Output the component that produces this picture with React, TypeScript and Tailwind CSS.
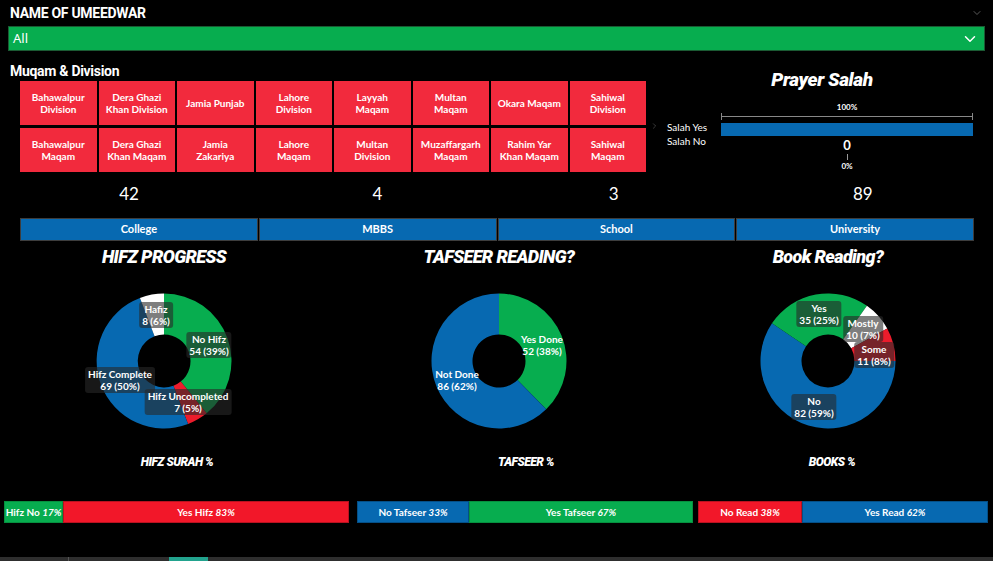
import { ChevronDown, ChevronRight } from "lucide-react";

const GREEN = "#07ad4f";
const BLUE = "#0769b1";
const RED = "#ec1c2c";
const WHITE = "#ffffff";

const tiles = [
  ["Bahawalpur", "Division"],
  ["Dera Ghazi", "Khan Division"],
  ["Jamia Punjab"],
  ["Lahore", "Division"],
  ["Layyah", "Maqam"],
  ["Multan", "Maqam"],
  ["Okara Maqam"],
  ["Sahiwal", "Division"],
  ["Bahawalpur", "Maqam"],
  ["Dera Ghazi", "Khan Maqam"],
  ["Jamia", "Zakariya"],
  ["Lahore", "Maqam"],
  ["Multan", "Division"],
  ["Muzaffargarh", "Maqam"],
  ["Rahim Yar", "Khan Maqam"],
  ["Sahiwal", "Maqam"],
];

type Slice = { v: number; c: string };
type Label = { lines: [string, string]; pos: string; box?: boolean };

function arc(a0: number, a1: number, r0: number, r1: number) {
  const cx = 70;
  const cy = 70;
  const p = (a: number, r: number) => {
    const t = a * Math.PI * 2;
    return `${(cx + r * Math.sin(t)).toFixed(2)} ${(cy - r * Math.cos(t)).toFixed(2)}`;
  };
  const large = a1 - a0 > 0.5 ? 1 : 0;
  return `M ${p(a0, r1)} A ${r1} ${r1} 0 ${large} 1 ${p(a1, r1)} L ${p(a1, r0)} A ${r0} ${r0} 0 ${large} 0 ${p(a0, r0)} Z`;
}

function Donut({ slices, start }: { slices: Slice[]; start: number }) {
  const total = slices.reduce((s, x) => s + x.v, 0);
  let acc = start;
  return (
    <svg width="140" height="140" viewBox="0 0 140 140">
      {slices.map((s, i) => {
        const a0 = acc;
        const a1 = acc + s.v / total;
        acc = a1;
        return <path key={i} d={arc(a0, a1, 26.5, 67.5)} fill={s.c} />;
      })}
    </svg>
  );
}

function ChartColumn({
  title,
  caption,
  captionPad,
  slices,
  start,
  labels,
}: {
  title: string;
  caption: string;
  captionPad: string;
  slices: Slice[];
  start: number;
  labels: Label[];
}) {
  return (
    <div className="flex flex-col items-center">
      <h2 className="mt-[5px] font-['Roboto',sans-serif] text-[18px] font-black italic leading-[22px] tracking-[-0.6px] text-white">
        {title}
      </h2>
      <div className="relative mt-[23px] h-[140px] w-[140px]">
        <Donut slices={slices} start={start} />
        {labels.map((l) => (
          <div
            key={l.lines[0]}
            className={`absolute -translate-x-1/2 -translate-y-1/2 whitespace-nowrap rounded-[3px] px-[3px] py-[1px] text-center text-[10px] font-bold leading-[12px] text-white ${l.pos} ${
              l.box === false ? "" : "bg-[rgba(40,40,40,0.6)]"
            }`}
          >
            <div>{l.lines[0]}</div>
            <div>{l.lines[1]}</div>
          </div>
        ))}
      </div>
      <div className={`mt-[17px] ${captionPad}`}>
        <span className="font-['Roboto',sans-serif] text-[12px] font-black italic leading-[14px] tracking-[-0.5px] text-white">
          {caption}
        </span>
      </div>
    </div>
  );
}

function Seg({ w, bg, border, name, pct }: { w: string; bg: string; border: string; name: string; pct: string }) {
  return (
    <div className={`flex h-full items-center justify-center border ${w} ${bg} ${border}`}>
      <span className="text-[10px] font-bold text-white">
        {name} <span className="italic">{pct}</span>
      </span>
    </div>
  );
}

export default function App() {
  return (
    <div className="relative flex h-[561px] w-[993px] flex-col overflow-hidden bg-black font-['Segoe_UI',Lato,sans-serif] text-white">
      {/* Slicer */}
      <div className="flex items-center justify-between pl-[10px] pr-[10px] pt-[4px]">
        <span className="font-['Roboto',sans-serif] text-[14px] font-bold leading-[18px] tracking-[-0.3px]">
          NAME OF UMEEDWAR
        </span>
        <ChevronDown className="h-[12px] w-[12px] text-[#777]" strokeWidth={1.5} />
      </div>
      <div className="ml-[8px] mt-[4px] flex h-[25px] w-[977px] items-center justify-between border border-[#1b5a33] bg-[#07ad4f] pl-[4px] pr-[5px]">
        <span className="font-['Noto_Sans',sans-serif] text-[13px] leading-none">All</span>
        <ChevronDown className="h-[18px] w-[18px] text-white" strokeWidth={2} />
      </div>

      {/* Muqam + Prayer */}
      <div className="mt-[12px] flex">
        <div className="w-[646px]">
          <div className="pl-[10px] font-['Roboto',sans-serif] text-[14px] font-bold leading-[16px] tracking-[-0.3px]">
            Muqam &amp; Division
          </div>
          <div className="ml-[20px] mt-[2px] grid grid-cols-[repeat(8,76.5px)] gap-x-[2px] gap-y-[3px]">
            {tiles.map((t, i) => (
              <div
                key={i}
                className="flex h-[44px] flex-col items-center justify-center bg-[#f22a3d] text-center text-[10px] font-bold leading-[12px]"
              >
                {t.map((line) => (
                  <span key={line}>{line}</span>
                ))}
              </div>
            ))}
          </div>
        </div>

        <div className="pl-[4px]">
          <div className="ml-[72px] mt-[6px] w-[200px] text-center font-['Roboto',sans-serif] text-[19px] font-black italic leading-[22px] tracking-[-0.4px]">
            Prayer Salah
          </div>
          <div className="flex">
            <div className="flex w-[71px] items-start pt-[29px]">
              <ChevronRight className="mt-[-1px] h-[14px] w-[9px] text-[#666]" strokeWidth={1.5} />
              <div className="ml-[8px] text-[10px] leading-[14px]">
                <div>Salah Yes</div>
                <div>Salah No</div>
              </div>
            </div>
            <div className="flex w-[252px] flex-col items-center pt-[12px]">
              <div className="text-[8px] font-bold leading-[9px]">100%</div>
              <div className="mt-[1px] flex h-[7px] w-full items-center border-x border-[#888]">
                <div className="h-px w-full bg-[#888]" />
              </div>
              <div className="mt-[3px] h-[13px] w-full bg-[#0769b1]" />
              <div className="mt-[2px] text-[13px] font-bold leading-[14px]">0</div>
              <div className="mt-[2px] h-[6px] w-px bg-[#999]" />
              <div className="mt-[2px] text-[8px] font-bold leading-[9px]">0%</div>
            </div>
          </div>
        </div>
      </div>

      {/* Totals */}
      <div className="ml-[20px] mt-[12px] grid w-[953px] grid-cols-4 text-[17px] leading-[20px]">
        <div className="pr-[20px] text-center">42</div>
        <div className="text-center">4</div>
        <div className="pr-[4px] text-center">3</div>
        <div className="pl-[18px] text-center">89</div>
      </div>

      {/* Categories */}
      <div className="ml-[20px] mt-[14px] grid w-[954px] grid-cols-4 gap-x-[1px]">
        {["College", "MBBS", "School", "University"].map((c) => (
          <div
            key={c}
            className="flex h-[23px] items-center justify-center border border-[#3d3d3d] bg-[#0769b1] text-[11px] font-bold"
          >
            {c}
          </div>
        ))}
      </div>

      {/* Donuts */}
      <div className="grid grid-cols-[328px_342px_316px]">
        <ChartColumn
          title="HIFZ PROGRESS"
          caption="HIFZ SURAH %"
          captionPad="pl-[26px]"
          start={0}
          slices={[
            { v: 54, c: GREEN },
            { v: 7, c: RED },
            { v: 69, c: BLUE },
            { v: 8, c: WHITE },
          ]}
          labels={[
            { lines: ["Hafiz", "8 (6%)"], pos: "left-[62px] top-[24px]" },
            { lines: ["No Hifz", "54 (39%)"], pos: "left-[115px] top-[54px]" },
            { lines: ["Hifz Complete", "69 (50%)"], pos: "left-[26px] top-[89px]" },
            { lines: ["Hifz Uncompleted", "7 (5%)"], pos: "left-[94px] top-[111px]" },
          ]}
        />
        <ChartColumn
          title="TAFSEER READING?"
          caption="TAFSEER %"
          captionPad="pl-[54px]"
          start={0}
          slices={[
            { v: 52, c: GREEN },
            { v: 86, c: BLUE },
          ]}
          labels={[
            { lines: ["Yes Done", "52 (38%)"], pos: "left-[113px] top-[54px]", box: false },
            { lines: ["Not Done", "86 (62%)"], pos: "left-[28px] top-[89px]", box: false },
          ]}
        />
        <ChartColumn
          title="Book Reading?"
          caption="BOOKS %"
          captionPad="pl-[8px]"
          start={0.25}
          slices={[
            { v: 82, c: BLUE },
            { v: 35, c: GREEN },
            { v: 10, c: WHITE },
            { v: 11, c: RED },
          ]}
          labels={[
            { lines: ["Yes", "35 (25%)"], pos: "left-[61px] top-[23px]" },
            { lines: ["Mostly", "10 (7%)"], pos: "left-[105px] top-[38px]" },
            { lines: ["Some", "11 (8%)"], pos: "left-[116px] top-[64px]" },
            { lines: ["No", "82 (59%)"], pos: "left-[56px] top-[116px]" },
          ]}
        />
      </div>

      {/* Stacked percentage bars */}
      <div className="ml-[4px] mt-[29px] flex h-[22px]">
        <div className="flex w-[345px]">
          <Seg w="w-[59px]" bg="bg-[#07ad4f]" border="border-[#06903f]" name="Hifz No" pct="17%" />
          <Seg w="flex-1" bg="bg-[#f21729]" border="border-[#b81220]" name="Yes Hifz" pct="83%" />
        </div>
        <div className="ml-[8px] flex w-[336px]">
          <Seg w="w-[112px]" bg="bg-[#0769b1]" border="border-[#054f86]" name="No Tafseer" pct="33%" />
          <Seg w="flex-1" bg="bg-[#07ad4f]" border="border-[#06903f]" name="Yes Tafseer" pct="67%" />
        </div>
        <div className="ml-[5px] flex w-[290px]">
          <Seg w="w-[104px]" bg="bg-[#f21729]" border="border-[#b81220]" name="No Read" pct="38%" />
          <Seg w="flex-1" bg="bg-[#0769b1]" border="border-[#054f86]" name="Yes Read" pct="62%" />
        </div>
      </div>

      {/* Page scroller */}
      <div className="mt-auto flex h-[4px] w-full bg-[#2e2e2e]">
        <div className="ml-[68px] h-full w-px bg-[#555]" />
        <div className="ml-[100px] h-full w-[39px] bg-[#22a38e]" />
      </div>
    </div>
  );
}
